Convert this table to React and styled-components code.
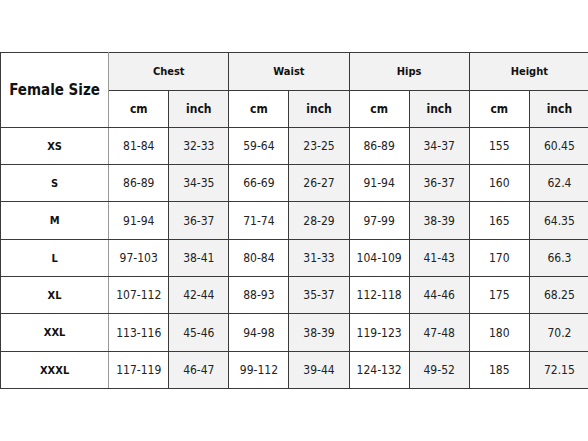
import styled, { createGlobalStyle } from 'styled-components'

const GlobalStyle = createGlobalStyle`
  html, body {
    margin: 0;
    padding: 0;
    background: #fff;
  }
  body {
    font-family: "DejaVu Sans Condensed", "DejaVu Sans", sans-serif;
    color: #111;
  }
`

const groups = ['Chest', 'Waist', 'Hips', 'Height']

const rows = [
  ['XS', '81-84', '32-33', '59-64', '23-25', '86-89', '34-37', '155', '60.45'],
  ['S', '86-89', '34-35', '66-69', '26-27', '91-94', '36-37', '160', '62.4'],
  ['M', '91-94', '36-37', '71-74', '28-29', '97-99', '38-39', '165', '64.35'],
  ['L', '97-103', '38-41', '80-84', '31-33', '104-109', '41-43', '170', '66.3'],
  ['XL', '107-112', '42-44', '88-93', '35-37', '112-118', '44-46', '175', '68.25'],
  ['XXL', '113-116', '45-46', '94-98', '38-39', '119-123', '47-48', '180', '70.2'],
  ['XXXL', '117-119', '46-47', '99-112', '39-44', '124-132', '49-52', '185', '72.15'],
]

function App() {
  return (
    <>
      <GlobalStyle />
      <Page>
        <SizeTable>
          <colgroup>
            <col style={{ width: 108 }} />
            {Array.from({ length: 8 }).map((_, i) => (
              <col key={i} style={{ width: 60 }} />
            ))}
          </colgroup>
          <thead>
            <tr>
              <TitleCell rowSpan={2}>Female Size</TitleCell>
              {groups.map((g) => (
                <GroupCell key={g} colSpan={2}>{g}</GroupCell>
              ))}
            </tr>
            <tr>
              {groups.map((g) => (
                <>
                  <UnitCell key={g + 'cm'}>cm</UnitCell>
                  <UnitCell key={g + 'in'} $shade>inch</UnitCell>
                </>
              ))}
            </tr>
          </thead>
          <tbody>
            {rows.map((r, idx) => (
              <tr key={r[0]}>
                <SizeCell $tall={idx % 3 === 2}>{r[0]}</SizeCell>
                {r.slice(1).map((v, i) => (
                  <ValueCell key={i} $shade={i % 2 === 1}>{v}</ValueCell>
                ))}
              </tr>
            ))}
          </tbody>
        </SizeTable>
      </Page>
    </>
  )
}

export default App

const Page = styled.div`
  width: 588px;
  height: 441px;
  overflow: hidden;
  padding-top: 52px;
  box-sizing: border-box;
`

const SizeTable = styled.table`
  border-collapse: collapse;
  table-layout: fixed;
  width: 590px;
  border-top: 1px solid #333;
  border-left: 1px solid #333;

  td, th {
    border: 1px solid #3a3a3a;
    padding: 0;
    text-align: center;
    vertical-align: middle;
  }
`

const TitleCell = styled.th`
  font-size: 15px;
  font-weight: bold;
  background: #fff;
  border-right-color: #999 !important;
`

const GroupCell = styled.th`
  height: 37px;
  font-size: 11px;
  font-weight: bold;
  background: #f2f2f2;
`

const UnitCell = styled.th`
  height: 36px;
  font-size: 12px;
  font-weight: bold;
  background: ${(p) => (p.$shade ? '#f2f2f2' : '#fff')};
`

const SizeCell = styled.td`
  height: ${(p) => (p.$tall ? 37 : 36)}px;
  font-size: 11px;
  font-weight: bold;
  background: #fff;
  border-right-color: #999 !important;
`

const ValueCell = styled.td`
  font-size: 12px;
  color: #222;
  background: ${(p) => (p.$shade ? '#f2f2f2' : '#fff')};
`
